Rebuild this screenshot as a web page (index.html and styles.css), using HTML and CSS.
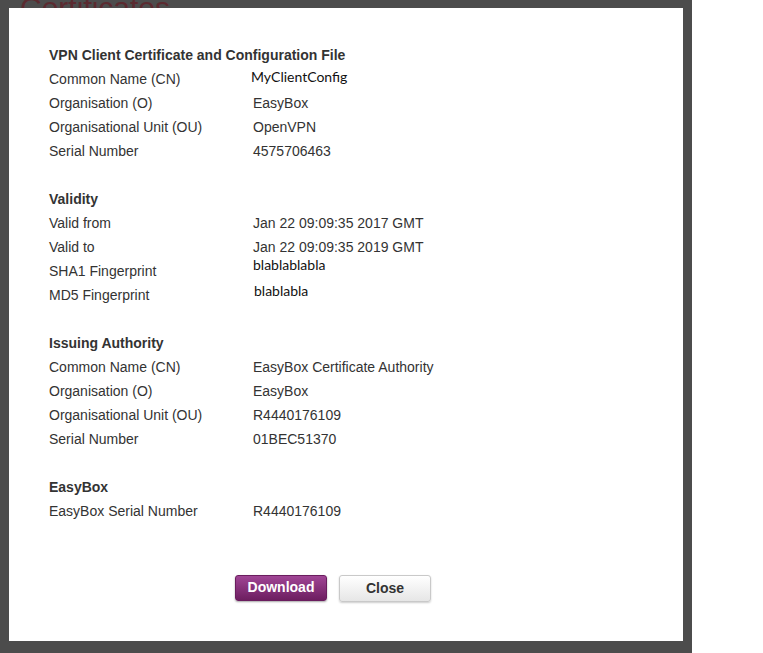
FILE: index.html
```html
<!DOCTYPE html>
<html>
<head>
<meta charset="utf-8">
<link rel="stylesheet" href="styles.css">
</head>
<body>
<div class="backdrop">
  <h1 class="page-title">Certificates</h1>
  <div class="dialog">
    <section class="group">
      <h2 class="group-title">VPN Client Certificate and Configuration File</h2>
      <div class="row"><span class="label">Common Name (CN)</span><span class="value pasted p1">MyClientConfig</span></div>
      <div class="row"><span class="label">Organisation (O)</span><span class="value">EasyBox</span></div>
      <div class="row"><span class="label">Organisational Unit (OU)</span><span class="value">OpenVPN</span></div>
      <div class="row"><span class="label">Serial Number</span><span class="value">4575706463</span></div>
    </section>
    <section class="group">
      <h2 class="group-title">Validity</h2>
      <div class="row"><span class="label">Valid from</span><span class="value">Jan 22 09:09:35 2017 GMT</span></div>
      <div class="row"><span class="label">Valid to</span><span class="value">Jan 22 09:09:35 2019 GMT</span></div>
      <div class="row"><span class="label">SHA1 Fingerprint</span><span class="value pasted p2">blablablabla</span></div>
      <div class="row"><span class="label">MD5 Fingerprint</span><span class="value pasted p3">blablabla</span></div>
    </section>
    <section class="group">
      <h2 class="group-title">Issuing Authority</h2>
      <div class="row"><span class="label">Common Name (CN)</span><span class="value">EasyBox Certificate Authority</span></div>
      <div class="row"><span class="label">Organisation (O)</span><span class="value">EasyBox</span></div>
      <div class="row"><span class="label">Organisational Unit (OU)</span><span class="value">R4440176109</span></div>
      <div class="row"><span class="label">Serial Number</span><span class="value">01BEC51370</span></div>
    </section>
    <section class="group">
      <h2 class="group-title">EasyBox</h2>
      <div class="row"><span class="label">EasyBox Serial Number</span><span class="value">R4440176109</span></div>
    </section>
    <div class="actions">
      <button class="btn btn-primary">Download</button>
      <button class="btn btn-default">Close</button>
    </div>
  </div>
</div>
</body>
</html>
```
FILE: styles.css
```css
html, body {
  margin: 0;
  padding: 0;
  background: #ffffff;
}
body {
  width: 763px;
  height: 653px;
  overflow: hidden;
  font-family: "Liberation Sans", Arial, sans-serif;
  font-size: 14px;
  color: #333333;
}
.backdrop {
  position: relative;
  width: 692px;
  height: 653px;
  background: #4c4c4c;
  overflow: hidden;
}
.page-title {
  margin: 0;
  padding: 0 0 0 20px;
  font-family: "Liberation Sans", Arial, sans-serif;
  font-weight: normal;
  font-size: 30px;
  line-height: 30px;
  color: #5b2a30;
  transform: translateY(-7px);
}
.dialog {
  position: absolute;
  left: 9px;
  top: 8px;
  width: 674px;
  height: 633px;
  background: #ffffff;
  box-sizing: border-box;
  padding: 35px 40px 0 40px;
}
.group {
  margin: 0 0 24px 0;
}
.group-title {
  margin: 0;
  font-size: 14px;
  font-weight: bold;
  line-height: 24px;
  color: #333333;
}
.row {
  display: flex;
  height: 24px;
  line-height: 24px;
}
.label {
  width: 204px;
  flex: none;
}
.value {
  flex: 1;
}
.pasted {
  font-family: Lato, "Open Sans", sans-serif;
  font-size: 14px;
  color: #111111;
}
.p1 {
  margin-left: -2px;
  margin-top: -2px;
}
.p2 {
  margin-top: -6px;
}
.p3 {
  margin-top: -4px;
  margin-left: 1px;
}
.actions {
  display: flex;
  gap: 12px;
  padding: 28px 0 0 186px;
}
.btn {
  width: 92px;
  height: 26px;
  border-radius: 3px;
  font-family: "Liberation Sans", Arial, sans-serif;
  font-size: 14px;
  font-weight: bold;
  padding: 0 0 2px 0;
  line-height: 22px;
}
.btn-primary {
  color: #ffffff;
  border: 1px solid #6a1d5e;
  background: linear-gradient(#a04595, #6d1e60);
  box-shadow: 0 1px 2px rgba(0,0,0,0.35);
}
.btn-default {
  color: #333333;
  height: 27px;
  border: 1px solid #c9c9c9;
  background: linear-gradient(#ffffff, #e6e6e6);
  box-shadow: 0 1px 2px rgba(0,0,0,0.2);
}
```
